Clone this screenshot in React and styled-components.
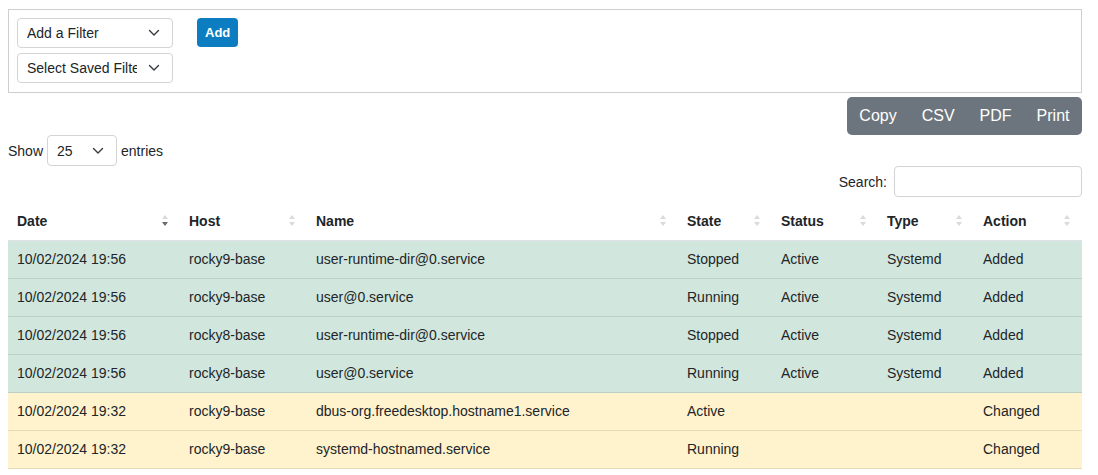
import React from 'react'
import styled, { createGlobalStyle } from 'styled-components'

const GlobalStyle = createGlobalStyle`
  body {
    margin: 0;
    font-family: "Liberation Sans", Arial, sans-serif;
    font-size: 14px;
    color: #212529;
    background: #fff;
  }
  * { box-sizing: border-box; }
`

const Page = styled.div`
  padding: 9px 16px 0 8px;
`

const FilterCard = styled.div`
  border: 1px solid #cfcfcf;
  height: 84px;
  padding: 8px 8px;
  display: flex;
  gap: 24px;
  align-items: flex-start;
`

const SelectStack = styled.div`
  display: flex;
  flex-direction: column;
  gap: 5px;
`

const SelectBox = styled.div`
  width: ${(p) => p.$w}px;
  height: ${(p) => p.$h || 30}px;
  border: 1px solid #d4d4d4;
  border-radius: 4px;
  display: flex;
  align-items: center;
  justify-content: space-between;
  padding: 0 12px 0 9px;
  font-size: 14px;
  color: #212529;
  white-space: nowrap;
  overflow: hidden;
  background: #fff;
`

const SelectText = styled.span`
  overflow: hidden;
  width: ${(p) => p.$w}px;
`

const AddButton = styled.button`
  background: #0b7dc0;
  color: #fff;
  border: none;
  border-radius: 4px;
  font-family: inherit;
  font-weight: bold;
  font-size: 13px;
  height: 29px;
  padding: 0 8px;
`

const ExportRow = styled.div`
  display: flex;
  justify-content: flex-end;
  margin-top: 4px;
`

const ExportGroup = styled.div`
  background: #6c757d;
  border-radius: 5px;
  display: flex;
  height: 38px;
  align-items: center;
`

const ExportButton = styled.span`
  color: #fff;
  font-size: 16px;
  padding: 0 12.5px;
`

const LengthRow = styled.div`
  display: flex;
  align-items: center;
  gap: 4px;
  height: 31px;
  font-size: 14px;
`

const SearchRow = styled.div`
  display: flex;
  justify-content: flex-end;
  align-items: center;
  gap: 7px;
  height: 31px;
  font-size: 14px;
`

const SearchInput = styled.div`
  width: 188px;
  height: 31px;
  border: 1px solid #d4d4d4;
  border-radius: 4px;
`

const Table = styled.table`
  width: 100%;
  border-collapse: collapse;
  margin-top: 8px;
  font-size: 14px;
`

const Th = styled.th`
  text-align: left;
  font-weight: bold;
  height: 35px;
  padding: 0 9px 2px;
  width: ${(p) => p.$w}px;
  position: relative;
  border-bottom: 1px solid #dee2e6;
`

const SortIcon = styled.span`
  position: absolute;
  right: 12px;
  top: 10px;
  display: flex;
  flex-direction: column;
  gap: 3px;
`

const Td = styled.td`
  height: 38px;
  padding: 0 9px;
  background: ${(p) => (p.$tone === 'green' ? '#d1e7dd' : '#fff3cd')};
  border-bottom: 1px solid ${(p) => (p.$tone === 'green' ? '#bcd0c7' : '#e6dbb9')};
`

const Arrows = ({ active }) => (
  <SortIcon>
    <svg width="6" height="4" viewBox="0 0 6 4">
      <path d="M0 4 L3 0 L6 4 Z" fill="#dadada" />
    </svg>
    <svg width="6" height="4" viewBox="0 0 6 4">
      <path d="M0 0 L3 4 L6 0 Z" fill={active ? '#6b6b6b' : '#dadada'} />
    </svg>
  </SortIcon>
)

const Chevron = () => (
  <svg width="12" height="8" viewBox="0 0 12 8" style={{ flexShrink: 0 }}>
    <path d="M1.5 1.5 L6 6 L10.5 1.5" fill="none" stroke="#343a40" strokeWidth="1.4" strokeLinecap="round" strokeLinejoin="round" />
  </svg>
)

const columns = [
  { name: 'Date', w: 172, active: true },
  { name: 'Host', w: 127 },
  { name: 'Name', w: 371 },
  { name: 'State', w: 94 },
  { name: 'Status', w: 106 },
  { name: 'Type', w: 96 },
  { name: 'Action', w: 108 },
]

const rows = [
  ['green', '10/02/2024 19:56', 'rocky9-base', 'user-runtime-dir@0.service', 'Stopped', 'Active', 'Systemd', 'Added'],
  ['green', '10/02/2024 19:56', 'rocky9-base', 'user@0.service', 'Running', 'Active', 'Systemd', 'Added'],
  ['green', '10/02/2024 19:56', 'rocky8-base', 'user-runtime-dir@0.service', 'Stopped', 'Active', 'Systemd', 'Added'],
  ['green', '10/02/2024 19:56', 'rocky8-base', 'user@0.service', 'Running', 'Active', 'Systemd', 'Added'],
  ['yellow', '10/02/2024 19:32', 'rocky9-base', 'dbus-org.freedesktop.hostname1.service', 'Active', '', '', 'Changed'],
  ['yellow', '10/02/2024 19:32', 'rocky9-base', 'systemd-hostnamed.service', 'Running', '', '', 'Changed'],
]

export default function App() {
  return (
    <Page>
      <GlobalStyle />
      <FilterCard>
        <SelectStack>
          <SelectBox $w={156}>
            <SelectText $w={110}>Add a Filter</SelectText>
            <Chevron />
          </SelectBox>
          <SelectBox $w={156}>
            <SelectText $w={110}>Select Saved Filter</SelectText>
            <Chevron />
          </SelectBox>
        </SelectStack>
        <AddButton>Add</AddButton>
      </FilterCard>
      <ExportRow>
        <ExportGroup>
          <ExportButton>Copy</ExportButton>
          <ExportButton>CSV</ExportButton>
          <ExportButton>PDF</ExportButton>
          <ExportButton>Print</ExportButton>
        </ExportGroup>
      </ExportRow>
      <LengthRow>
        Show
        <SelectBox $w={70} $h={31}>
          <SelectText $w={30}>25</SelectText>
          <Chevron />
        </SelectBox>
        entries
      </LengthRow>
      <SearchRow>
        Search:
        <SearchInput />
      </SearchRow>
      <Table>
        <thead>
          <tr>
            {columns.map((c) => (
              <Th key={c.name} $w={c.w}>
                {c.name}
                <Arrows active={c.active} />
              </Th>
            ))}
          </tr>
        </thead>
        <tbody>
          {rows.map((r, i) => (
            <tr key={i}>
              {r.slice(1).map((v, j) => (
                <Td key={j} $tone={r[0]}>{v}</Td>
              ))}
            </tr>
          ))}
        </tbody>
      </Table>
    </Page>
  )
}
